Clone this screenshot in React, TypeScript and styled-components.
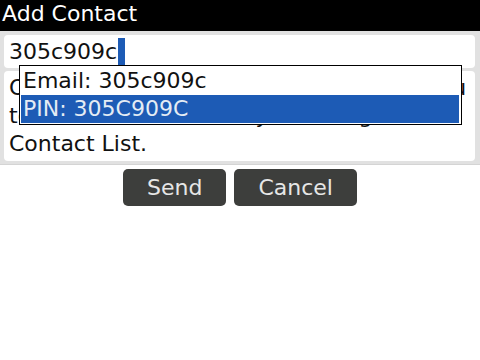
import styled, { createGlobalStyle } from "styled-components";

const GlobalStyle = createGlobalStyle`
  body {
    margin: 0;
    background: #ffffff;
    font-family: "DejaVu Sans", "Liberation Sans", sans-serif;
  }
`;

const Screen = styled.div`
  width: 480px;
  height: 360px;
  background: #ffffff;
  overflow: hidden;
`;

const TitleBar = styled.div`
  height: 31px;
  background: #000000;
  color: #ffffff;
  font-size: 22px;
  line-height: 27px;
  padding-left: 2px;
`;

const Panel = styled.div`
  position: relative;
  background: #e1e1e1;
  padding: 4px 5px 3px 4px;
  display: flex;
  flex-direction: column;
  gap: 3px;
  border-bottom: 1px solid #d4d4d4;
`;

const Field = styled.div`
  height: 33px;
  background: #ffffff;
  border-radius: 4px;
  padding-left: 5px;
  display: flex;
  align-items: center;
  font-size: 22px;
  line-height: 28px;
  color: #111111;
`;

const Caret = styled.span`
  display: inline-block;
  width: 7px;
  height: 27px;
  margin-left: 1px;
  background: #1d5bb5;
`;

const Message = styled.div`
  background: #ffffff;
  border-radius: 4px;
  padding: 3px 5px 3px 5px;
  font-size: 22px;
  line-height: 28px;
  color: #111111;
  white-space: nowrap;
  overflow: hidden;
`;

const Suggestions = styled.ul`
  position: absolute;
  left: 19px;
  top: 34px;
  width: 438px;
  margin: 0;
  padding: 1px 2px 1px 1px;
  list-style: none;
  background: #ffffff;
  border: 1px solid #000000;
`;

const Suggestion = styled.li<{ $active?: boolean }>`
  height: 28px;
  padding-left: 2px;
  font-size: 22px;
  line-height: 28px;
  background: ${(p) => (p.$active ? "#1d5bb5" : "#ffffff")};
  color: ${(p) => (p.$active ? "#e4ecf4" : "#111111")};
`;

const Buttons = styled.div`
  display: flex;
  justify-content: center;
  gap: 8px;
  margin-top: 4px;
`;

const Button = styled.button`
  height: 37px;
  padding: 0 24px;
  border: none;
  border-radius: 5px;
  background: #3d3e3c;
  color: #e6e6e6;
  font-family: "DejaVu Sans", "Liberation Sans", sans-serif;
  font-size: 22px;
  line-height: 37px;
`;

export default function App() {
  return (
    <Screen>
      <GlobalStyle />
      <TitleBar>Add Contact</TitleBar>
      <Panel>
        <Field>
          305c909c
          <Caret />
        </Field>
        <Message>
          Once accepted, your contact will add you
          <br />
          to his or her BlackBerry Messenger
          <br />
          Contact List.
        </Message>
        <Suggestions>
          <Suggestion>Email: 305c909c</Suggestion>
          <Suggestion $active>PIN: 305C909C</Suggestion>
        </Suggestions>
      </Panel>
      <Buttons>
        <Button>Send</Button>
        <Button>Cancel</Button>
      </Buttons>
    </Screen>
  );
}
